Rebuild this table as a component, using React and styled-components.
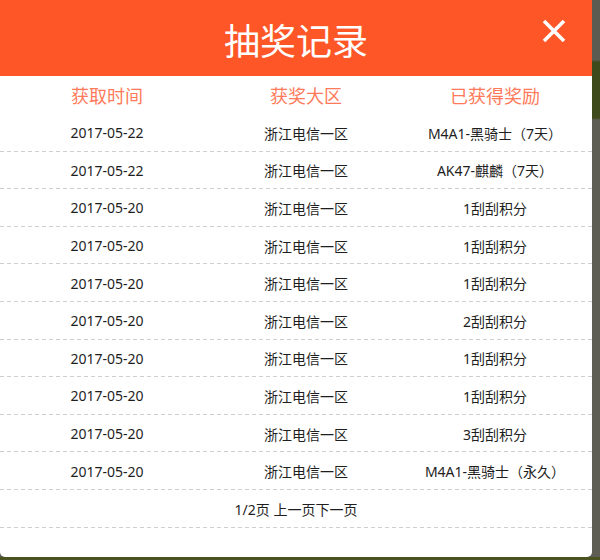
import React from "react";
import styled, { createGlobalStyle } from "styled-components";

const GlobalStyle = createGlobalStyle`
  html, body {
    margin: 0;
    padding: 0;
  }
  body {
    width: 600px;
    height: 560px;
    overflow: hidden;
    background:
      linear-gradient(to bottom, transparent 557px, #4a5222 557px),
      linear-gradient(to bottom, #5b5b52 0, #5b5b52 60px, #3f4a1c 62px, #3f4a1c 118px, #5e5e55 120px);
    font-family: "Noto Sans", "Noto Sans CJK SC", sans-serif;
  }
`;

const Modal = styled.div`
  width: 592px;
  height: 557px;
  background: #fff;
  border-radius: 0 0 5px 5px;
  overflow: hidden;
  display: flex;
  flex-direction: column;
`;

const Header = styled.div`
  position: relative;
  height: 76px;
  background: #fe5627;
  display: flex;
  align-items: center;
  justify-content: center;
`;

const Title = styled.h1`
  margin: 0;
  color: #fff;
  font-family: "Noto Sans CJK SC", sans-serif;
  font-size: 36px;
  font-weight: 400;
  line-height: 1;
  padding-top: 2px;
`;

const Close = styled.button`
  position: absolute;
  right: 26px;
  top: 19px;
  width: 24px;
  height: 24px;
  padding: 0;
  border: 0;
  background: none;
  cursor: pointer;
  display: flex;
`;

const dashed = `
  background-image: linear-gradient(to right, #cfcfcf 4px, transparent 4px);
  background-repeat: repeat-x;
  background-position: left bottom;
  background-size: 7px 1px;
`;

const Row = styled.div`
  display: grid;
  grid-template-columns: 214px 184px 1fr;
  height: ${(p) => (p.$head ? "38px" : "37.6px")};
  box-sizing: border-box;
  ${(p) => (p.$head ? "" : dashed)}
  align-items: center;
  text-align: center;
  color: ${(p) => (p.$head ? "#ff7a5a" : "#1e1e1e")};
  font-size: ${(p) => (p.$head ? "18px" : "14px")};
`;

const Cell = styled.div`
  white-space: nowrap;
`;

const Pager = styled.div`
  height: 37.6px;
  box-sizing: border-box;
  ${dashed}
  display: flex;
  align-items: center;
  justify-content: center;
  font-size: 14px;
  color: #1e1e1e;
`;

const PageLink = styled.span`
  cursor: pointer;
`;

const records = [
  ["2017-05-22", "浙江电信一区", "M4A1-黑骑士（7天）"],
  ["2017-05-22", "浙江电信一区", "AK47-麒麟（7天）"],
  ["2017-05-20", "浙江电信一区", "1刮刮积分"],
  ["2017-05-20", "浙江电信一区", "1刮刮积分"],
  ["2017-05-20", "浙江电信一区", "1刮刮积分"],
  ["2017-05-20", "浙江电信一区", "2刮刮积分"],
  ["2017-05-20", "浙江电信一区", "1刮刮积分"],
  ["2017-05-20", "浙江电信一区", "1刮刮积分"],
  ["2017-05-20", "浙江电信一区", "3刮刮积分"],
  ["2017-05-20", "浙江电信一区", "M4A1-黑骑士（永久）"],
];

function App() {
  return (
    <>
      <GlobalStyle />
      <Modal>
        <Header>
          <Title>抽奖记录</Title>
          <Close aria-label="关闭">
            <svg width="24" height="24" viewBox="0 0 24 24">
              <path
                d="M2 2 L22 22 M22 2 L2 22"
                stroke="#fff"
                strokeWidth="3.6"
              />
            </svg>
          </Close>
        </Header>
        <Row $head>
          <Cell>获取时间</Cell>
          <Cell>获奖大区</Cell>
          <Cell>已获得奖励</Cell>
        </Row>
        {records.map((r, i) => (
          <Row key={i}>
            <Cell>{r[0]}</Cell>
            <Cell>{r[1]}</Cell>
            <Cell>{r[2]}</Cell>
          </Row>
        ))}
        <Pager>
          1/2页&nbsp;<PageLink>上一页</PageLink>
          <PageLink>下一页</PageLink>
        </Pager>
      </Modal>
    </>
  );
}

export default App;
